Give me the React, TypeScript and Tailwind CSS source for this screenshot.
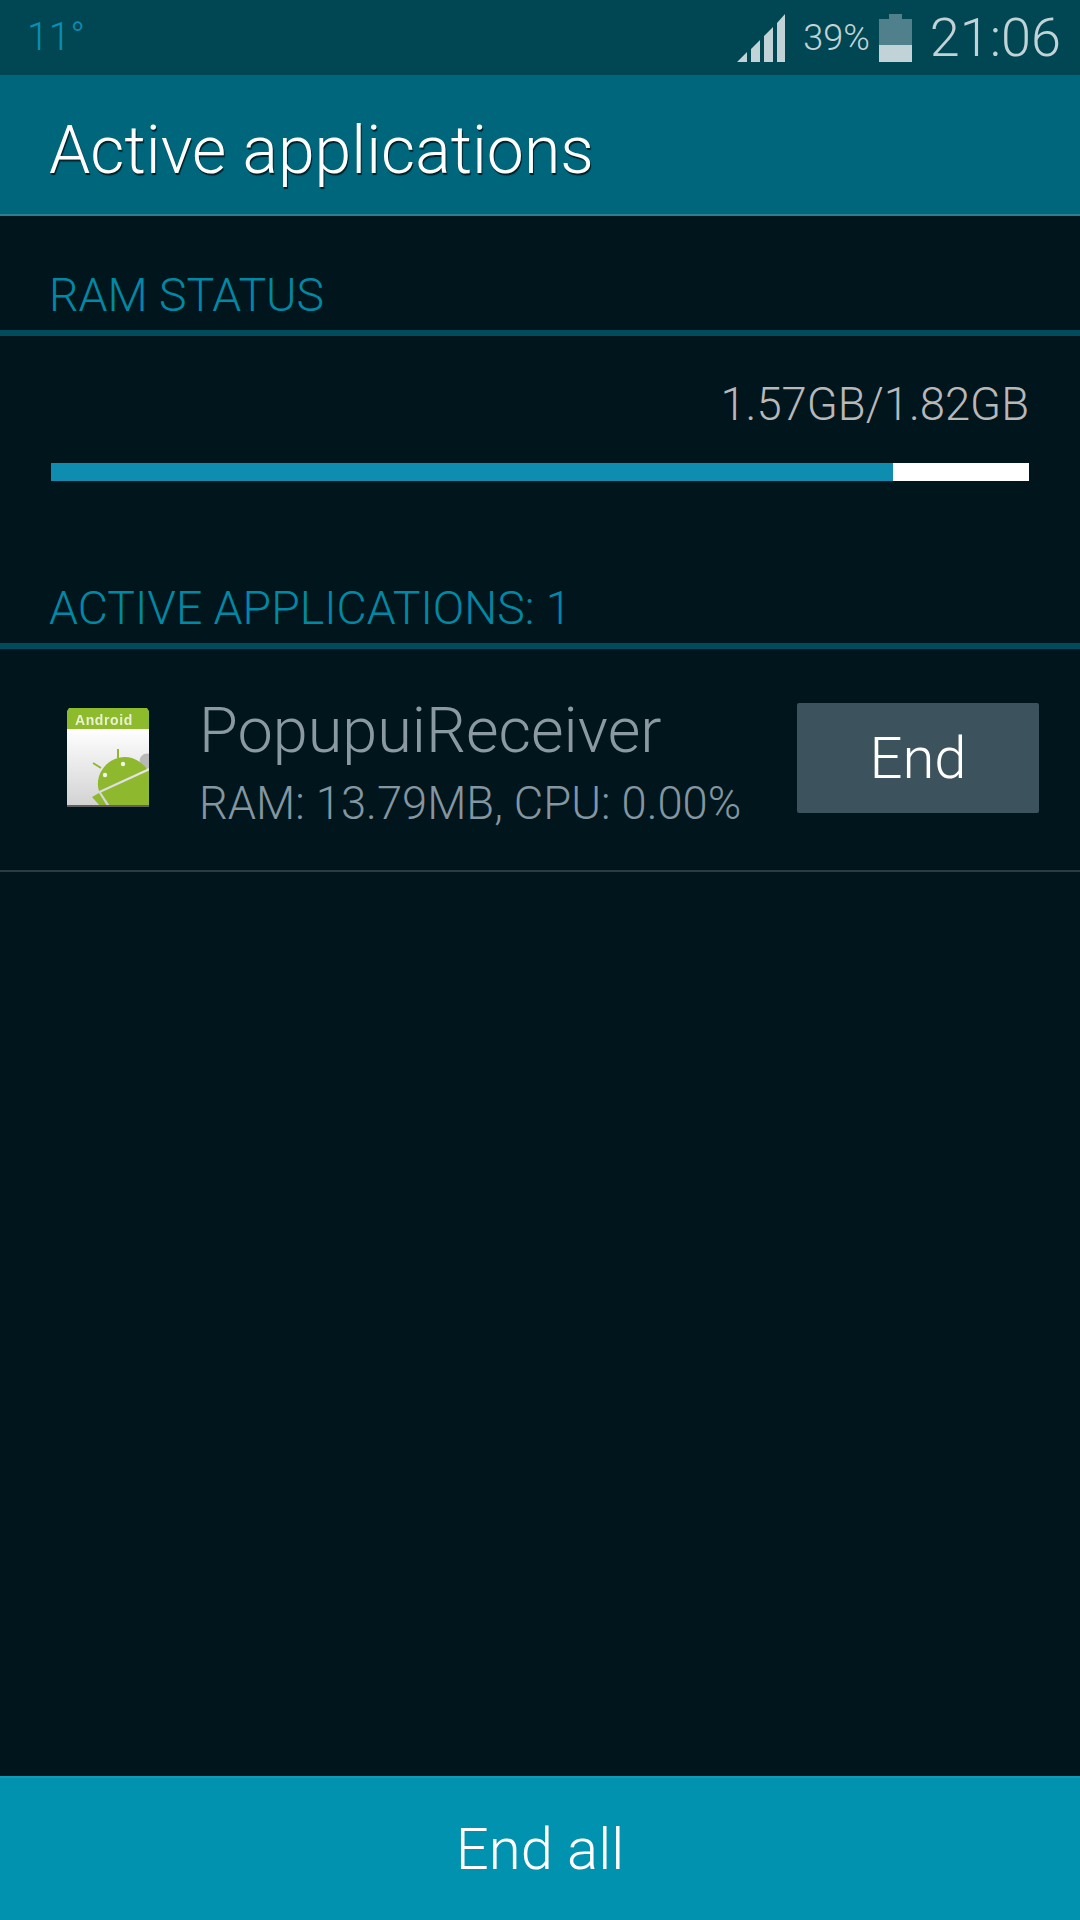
const font = { fontFamily: 'Roboto, "Liberation Sans", sans-serif' };

function SignalIcon() {
  return (
    <svg width="48" height="48" viewBox="0 0 48 48" className="shrink-0">
      <path d="M0 48 L10 38 V48 Z M14 48 V35 L23 26 V48 Z M27 48 V22 L36 13 V48 Z M40 48 V9 L48 0 V48 Z" fill="#c1d3d7" />
    </svg>
  );
}

function BatteryIcon() {
  return (
    <svg width="33" height="48" viewBox="0 0 33 48" className="shrink-0">
      <path d="M10 0 H23 V5 H33 V31 H0 V5 H10 Z" fill="#4f808b" />
      <rect x="0" y="31" width="33" height="17" fill="#c1d3d7" />
    </svg>
  );
}

function AndroidIcon() {
  return (
    <svg width="84" height="102" viewBox="0 0 84 102" className="shrink-0 blur-[0.4px]">
      <defs>
        <linearGradient id="paper" x1="0" y1="0" x2="0" y2="1">
          <stop offset="0" stopColor="#ffffff" />
          <stop offset="1" stopColor="#d2d2d2" />
        </linearGradient>
        <clipPath id="card">
          <rect x="1" y="2" width="82" height="98" />
        </clipPath>
      </defs>
      <rect x="1" y="22" width="82" height="78" fill="url(#paper)" />
      <path d="M3 2 H81 L83 5 V23 H1 V5 Z" fill="#8ebb2c" />
      <text x="9" y="19" fontSize="14" fontWeight="700" letterSpacing="0.6" fill="#e8f0d4" style={{ fontFamily: '"Liberation Sans", sans-serif' }}>
        Android
      </text>
      <g clipPath="url(#card)">
        <circle cx="81" cy="55" r="7.5" fill="#b9b9b9" />
        <path d="M52 43 V52 M27 57 L35 62 M76 58 L70 62" stroke="#8eb92e" strokeWidth="2" />
        <path d="M33 85 C27 66 46 46 66 52 C72 54 77 58 81 63 Z" fill="#8eb92e" />
        <path d="M35 86.5 L83 64.5 V100 H44 Z" fill="#8eb92e" />
        <path d="M26 91 L33 87 L41 100 H34 Z" fill="#8eb92e" />
        <circle cx="39" cy="69" r="2.2" fill="#f2f5e6" />
        <circle cx="57" cy="58" r="2.2" fill="#f2f5e6" />
      </g>
      <rect x="1" y="99" width="82" height="2" fill="#5f5f5f" />
    </svg>
  );
}

function SectionHeader({ label, className }: { label: string; className: string }) {
  return (
    <div className={`border-b-[6px] border-[#004c5d] pb-[10px] pl-[49px] text-[46.4px] leading-[50px] font-light text-[#0089a5] ${className}`}>
      {label}
    </div>
  );
}

export default function App() {
  return (
    <div className="flex h-[1920px] w-[1080px] flex-col bg-[#01151d] antialiased" style={font}>
      <div className="flex h-[75px] items-center justify-between bg-[#004753] pr-[19px] pl-[27px]">
        <span className="text-[39px] font-light text-[#0a8db6]">11°</span>
        <div className="flex items-center">
          <SignalIcon />
          <span className="ml-[18px] text-[36px] font-light text-[#c1d3d7]">39%</span>
          <div className="ml-[9px]">
            <BatteryIcon />
          </div>
          <span className="ml-[18px] text-[54px] font-light text-[#c1d3d7]">21:06</span>
        </div>
      </div>

      <div className="flex h-[141px] items-center border-b-2 border-[#2b7f8f] bg-[#00667c] pt-[12px] pl-[49px]">
        <h1 className="text-[66.2px] font-light text-white [text-shadow:1px_2px_1px_#00222c]">Active applications</h1>
      </div>

      <SectionHeader label="RAM STATUS" className="mt-[54px]" />

      <div className="mt-[44px] pr-[51px] text-right text-[45.4px] leading-[50px] font-light text-[#b8b8b8]">1.57GB/1.82GB</div>
      <div className="mx-[51px] mt-[33px] flex h-[18px]">
        <div className="w-[842px] bg-[#0e8db0]" />
        <div className="flex-1 bg-white" />
      </div>

      <SectionHeader label="ACTIVE APPLICATIONS: 1" className="mt-[102px]" />

      <div className="flex h-[223px] items-start border-b-2 border-[#2a3b42] pt-[54px]">
        <div className="mt-[3px] ml-[66px]">
          <AndroidIcon />
        </div>
        <div className="-mt-[7px] ml-[49px] flex-1">
          <div className="text-[63px] leading-[70px] font-light text-[#8b9aa2]">PopupuiReceiver</div>
          <div className="mt-[13px] text-[45.3px] leading-[50px] font-light text-[#8496a0]">RAM: 13.79MB, CPU: 0.00%</div>
        </div>
        <button className="mr-[41px] h-[110px] w-[242px] rounded-[2px] bg-[#3c525c] text-[58px] font-light text-white">End</button>
      </div>

      <div className="flex-1" />

      <button className="h-[144px] border-t-2 border-[#0f9ab5] bg-[#0092ae] text-[58px] font-light text-white">End all</button>
    </div>
  );
}
